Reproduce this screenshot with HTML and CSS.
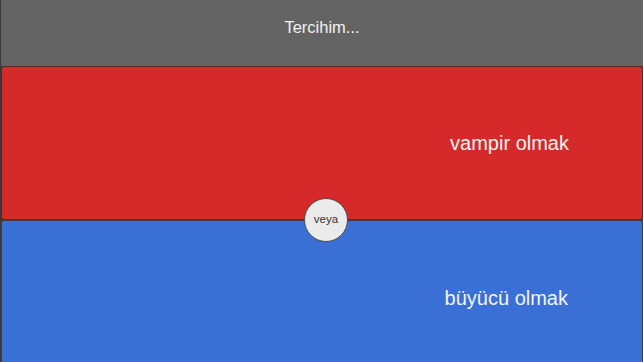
FILE: index.html
```html
<!DOCTYPE html>
<html lang="tr">
<head>
<meta charset="utf-8">
<link rel="stylesheet" href="styles.css">
</head>
<body>
<div class="screen">
  <header class="header">Tercihim...</header>
  <div class="panel panel-red"><span class="label">vampir olmak</span></div>
  <div class="panel panel-blue"><span class="label">büyücü olmak</span></div>
  <div class="or">veya</div>
</div>
</body>
</html>
```
FILE: styles.css
```css
html, body {
  margin: 0;
  padding: 0;
  width: 643px;
  height: 362px;
  overflow: hidden;
  background: #3c3c3c;
}
.screen {
  position: relative;
  width: 643px;
  height: 362px;
  overflow: hidden;
  font-family: "Liberation Sans", Arial, sans-serif;
  display: flex;
  flex-direction: column;
  border-left: 1px solid #3a3a3a;
  box-sizing: border-box;
}
.header {
  flex: 0 0 66px;
  box-sizing: border-box;
  background: #636363;
  color: #f2f2f2;
  font-size: 16.5px;
  line-height: 20px;
  padding-top: 17px;
  text-align: center;
}
.panel {
  flex: 0 0 154px;
  box-sizing: border-box;
  border: 1px solid #3b2b2b;
  border-radius: 3px;
  display: flex;
  align-items: center;
  justify-content: flex-end;
  padding-right: 73px;
  color: #f4f4f4;
  font-size: 20px;
}
.panel-red {
  background: #d5292a;
  border-color: #5b2626;
}
.panel-blue {
  background: #3a6fd5;
  border-color: #3b3f4e;
  padding-right: 74px;
}
.panel-blue .label {
  position: relative;
  top: 1px;
}
.or {
  position: absolute;
  left: 303px;
  top: 198px;
  width: 44px;
  height: 44px;
  box-sizing: border-box;
  border-radius: 50%;
  background: #ebebeb;
  border: 1.5px solid #4d4d4d;
  color: #333;
  font-size: 11.5px;
  display: flex;
  align-items: center;
  justify-content: center;
  padding-bottom: 3px;
}
```
